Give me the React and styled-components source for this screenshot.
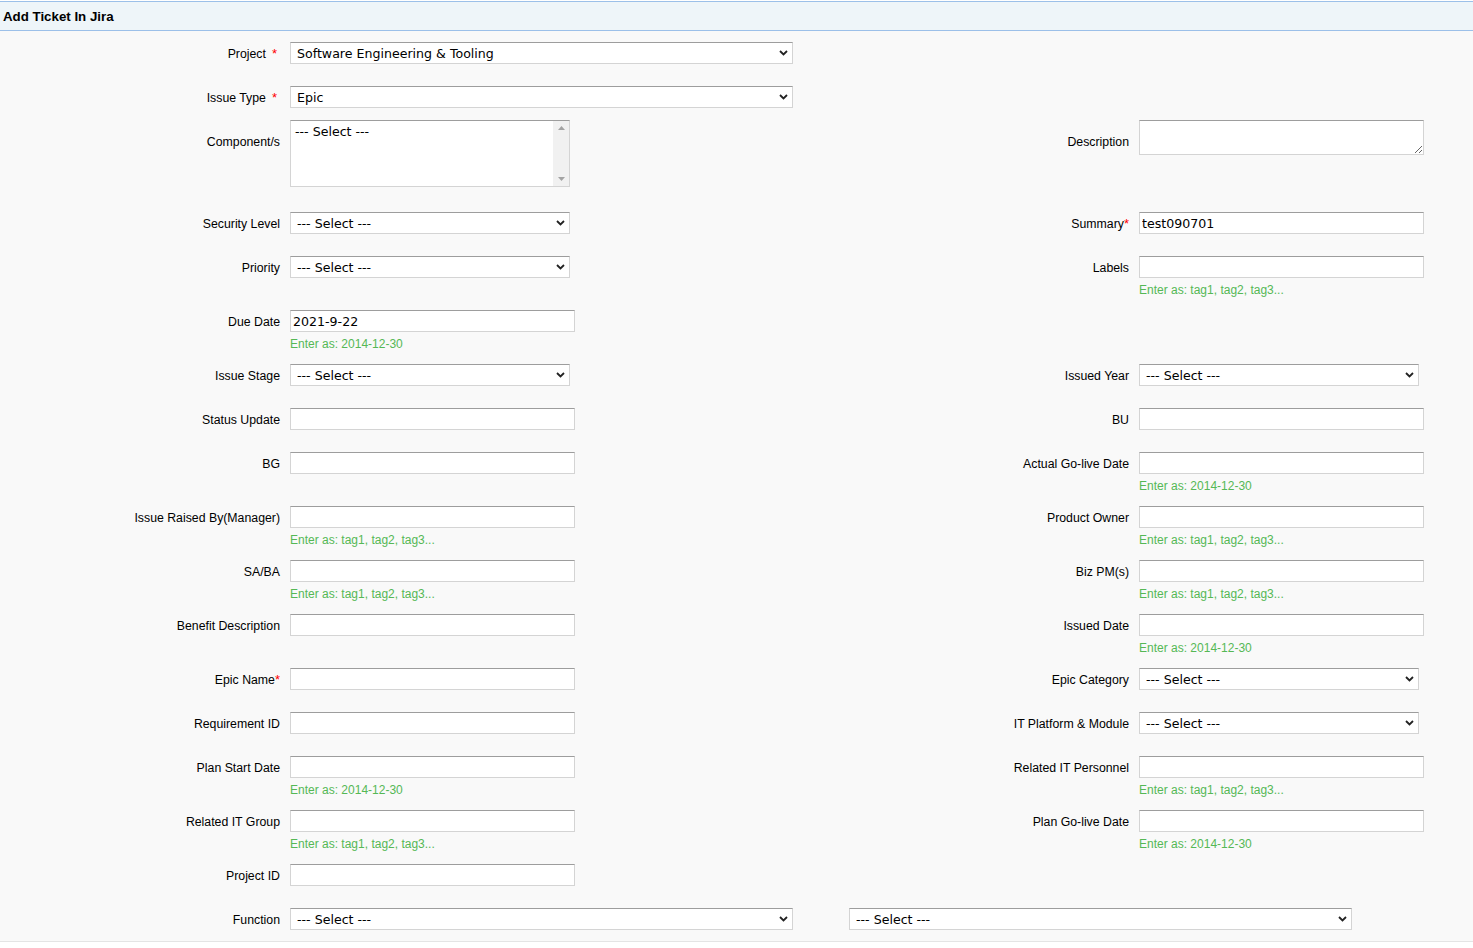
import React from "react";
import styled, { createGlobalStyle } from "styled-components";

const Global = createGlobalStyle`
  html, body { margin: 0; padding: 0; background: #ffffff; }
  body { font-family: "Liberation Sans", Arial, sans-serif; font-size: 12px; color: #000; }
  * { box-sizing: border-box; }
`;

const Page = styled.div`
  padding-top: 1px;
  width: 1473px;
`;

const Header = styled.div`
  height: 30px;
  background: #eef5f9;
  border-top: 1px solid #9cc0e9;
  border-bottom: 1px solid #9cc0e9;
  display: flex;
  align-items: center;
  padding-left: 3px;
  font-weight: bold;
  font-size: 13.3px;
  color: #000;
`;

const Form = styled.div`
  background: #f9f9f9;
  border-bottom: 1px solid #e4e4e4;
`;

const Row = styled.div`
  display: grid;
  grid-template-columns: 280px 549px 280px 334px;
  column-gap: 10px;
  padding: ${(p) => (p.$tall ? "1px 0 14px" : "11px 0 3px")};
`;

const Label = styled.div`
  text-align: right;
  font-size: 12.3px;
  line-height: 22px;
  height: 22px;
  padding-top: 1px;
  white-space: nowrap;
  margin-top: ${(p) => (p.$tall ? "10px" : "0")};
`;

const Req = styled.span`
  color: #ff0000;
  font-size: 13px;
  margin-left: ${(p) => (p.$spaced ? "6px" : "0")};
  margin-right: ${(p) => (p.$spaced ? "3px" : "0")};
`;

const Field = styled.div`
  display: flex;
  flex-direction: column;
  align-items: flex-start;
  min-height: ${(p) => (p.$tall ? "0" : "30px")};
  grid-column: ${(p) => p.$span || "auto"};
`;

const controlBorder = `
  border: 1px solid #d4d4d4;
  border-top-color: #9d9d9d;
  background: #ffffff;
`;

const Input = styled.input`
  ${controlBorder}
  width: 285px;
  height: 22px;
  padding: 0 2px;
  margin: 0;
  font-family: "DejaVu Sans", Verdana, sans-serif;
  font-size: 12.6px;
  color: #000;
  outline: none;
  border-radius: 0;
`;

const SelectWrap = styled.div`
  position: relative;
  width: ${(p) => (p.$wide ? "503px" : "280px")};
  height: 22px;
`;

const Select = styled.select`
  ${controlBorder}
  appearance: none;
  -webkit-appearance: none;
  width: 100%;
  height: 22px;
  margin: 0;
  padding: 0 20px 0 6px;
  font-family: "DejaVu Sans", Verdana, sans-serif;
  font-size: 12.6px;
  color: #000;
  border-radius: 0;
  outline: none;
`;

const Chevron = styled.svg`
  position: absolute;
  right: 5px;
  top: 8px;
  width: 9px;
  height: 6px;
  pointer-events: none;
`;

const Hint = styled.div`
  margin-top: 5px;
  margin-bottom: -1px;
  line-height: 14px;
  color: #55b855;
  white-space: nowrap;
`;

const ListBox = styled.div`
  ${controlBorder}
  width: 280px;
  height: 67px;
  display: flex;
  font-family: "DejaVu Sans", Verdana, sans-serif;
  font-size: 12.6px;
`;

const ListOptions = styled.div`
  flex: 1;
  padding: 3px 4px;
  line-height: 16px;
`;

const ListScroll = styled.div`
  width: 16px;
  background: #f1f1f1;
  display: flex;
  flex-direction: column;
  justify-content: space-between;
  align-items: center;
  padding: 5px 0 5px;
`;

const TextArea = styled.textarea`
  ${controlBorder}
  width: 285px;
  height: 35px;
  margin: 0;
  padding: 2px;
  font-family: "DejaVu Sans", Verdana, sans-serif;
  font-size: 12.6px;
  border-radius: 0;
  outline: none;
`;

const ChevronIcon = () => (
  <Chevron viewBox="0 0 9 6">
    <polyline points="1,1 4.5,4.5 8,1" fill="none" stroke="#222" strokeWidth="1.8" />
  </Chevron>
);

const SelectBox = ({ value, wide }) => (
  <SelectWrap $wide={wide}>
    <Select defaultValue={value}>
      <option>{value}</option>
    </Select>
    <ChevronIcon />
  </SelectWrap>
);

const LabelText = ({ label, req, spaced, tall }) => (
  <Label $tall={tall}>
    {label}
    {req && <Req $spaced={spaced}>*</Req>}
  </Label>
);

const Control = ({ f }) => {
  if (f.type === "select") return <SelectBox value={f.value || "--- Select ---"} wide={f.wide} />;
  if (f.type === "listbox")
    return (
      <ListBox>
        <ListOptions>--- Select ---</ListOptions>
        <ListScroll>
          <svg width="7" height="4" viewBox="0 0 7 4">
            <polygon points="0,4 3.5,0 7,4" fill="#a3a3a3" />
          </svg>
          <svg width="7" height="4" viewBox="0 0 7 4">
            <polygon points="0,0 3.5,4 7,0" fill="#a3a3a3" />
          </svg>
        </ListScroll>
      </ListBox>
    );
  if (f.type === "textarea") return <TextArea defaultValue="" />;
  return <Input defaultValue={f.value || ""} />;
};

const DATE = "Enter as: 2014-12-30";
const TAG = "Enter as: tag1, tag2, tag3...";

const rows = [
  { left: { label: "Project", req: true, spaced: true, type: "select", wide: true, value: "Software Engineering & Tooling" } },
  { left: { label: "Issue Type", req: true, spaced: true, type: "select", wide: true, value: "Epic" } },
  { tall: true, left: { label: "Component/s", type: "listbox" }, right: { label: "Description", type: "textarea" } },
  { left: { label: "Security Level", type: "select" }, right: { label: "Summary", req: true, type: "input", value: "test090701" } },
  { left: { label: "Priority", type: "select" }, right: { label: "Labels", type: "input", hint: TAG } },
  { left: { label: "Due Date", type: "input", value: "2021-9-22", hint: DATE } },
  { left: { label: "Issue Stage", type: "select" }, right: { label: "Issued Year", type: "select" } },
  { left: { label: "Status Update", type: "input" }, right: { label: "BU", type: "input" } },
  { left: { label: "BG", type: "input" }, right: { label: "Actual Go-live Date", type: "input", hint: DATE } },
  { left: { label: "Issue Raised By(Manager)", type: "input", hint: TAG }, right: { label: "Product Owner", type: "input", hint: TAG } },
  { left: { label: "SA/BA", type: "input", hint: TAG }, right: { label: "Biz PM(s)", type: "input", hint: TAG } },
  { left: { label: "Benefit Description", type: "input" }, right: { label: "Issued Date", type: "input", hint: DATE } },
  { left: { label: "Epic Name", req: true, type: "input" }, right: { label: "Epic Category", type: "select" } },
  { left: { label: "Requirement ID", type: "input" }, right: { label: "IT Platform & Module", type: "select" } },
  { left: { label: "Plan Start Date", type: "input", hint: DATE }, right: { label: "Related IT Personnel", type: "input", hint: TAG } },
  { left: { label: "Related IT Group", type: "input", hint: TAG }, right: { label: "Plan Go-live Date", type: "input", hint: DATE } },
  { left: { label: "Project ID", type: "input" } },
];

const Cell = ({ f, tall }) => (
  <>
    <LabelText label={f.label} req={f.req} spaced={f.spaced} tall={tall} />
    <Field $tall={tall}>
      <Control f={f} />
      {f.hint && <Hint>{f.hint}</Hint>}
    </Field>
  </>
);

export default function App() {
  return (
    <Page>
      <Global />
      <Header>Add Ticket In Jira</Header>
      <Form>
        {rows.map((r, i) => (
          <Row key={i} $tall={r.tall}>
            <Cell f={r.left} tall={r.tall} />
            {r.right && <Cell f={r.right} tall={r.tall} />}
          </Row>
        ))}
        <Row>
          <LabelText label="Function" />
          <Field>
            <SelectBox value="--- Select ---" wide />
          </Field>
          <Field $span="3 / 5">
            <SelectBox value="--- Select ---" wide />
          </Field>
        </Row>
      </Form>
    </Page>
  );
}
